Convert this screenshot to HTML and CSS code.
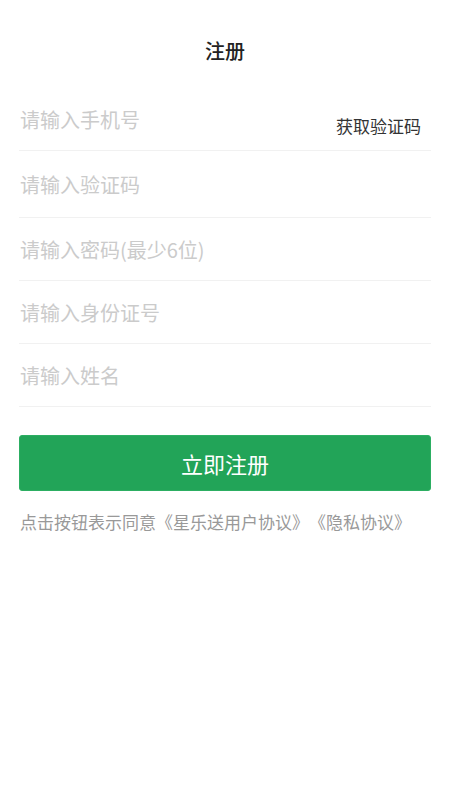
FILE: index.html
```html
<!DOCTYPE html>
<html lang="zh-CN">
<head>
    <meta charset="UTF-8">
    <meta name="viewport" content="width=device-width, initial-scale=1.0">
    <title>注册</title>
    <link rel="stylesheet" href="styles.css">
</head>
<body>

<div class="header">
    <h1>注册</h1>
</div>

<div class="form">
    <div class="form-row">
        <input type="tel" placeholder="请输入手机号">
        <span class="code-btn">获取验证码</span>
    </div>
    <div class="form-row row-code">
        <input type="text" placeholder="请输入验证码">
    </div>
    <div class="form-row">
        <input type="password" placeholder="请输入密码(最少6位)">
    </div>
    <div class="form-row">
        <input type="text" placeholder="请输入身份证号">
    </div>
    <div class="form-row">
        <input type="text" placeholder="请输入姓名">
    </div>

    <button class="submit">立即注册</button>

    <p class="agree">点击按钮表示同意《星乐送用户协议》《隐私协议》</p>
</div>

</body>
</html>
```

FILE: styles.css
```css
/* Base body styling */
body {
    font-family: "Noto Sans CJK SC", "Noto Sans", sans-serif;
    margin: 0;
    padding: 0;
    background-color: #fff;
}

/* Title bar */
.header {
    height: 88px;
    display: flex;
    justify-content: center;
    padding-top: 35px;
    box-sizing: border-box;
}

h1 {
    margin: 0;
    font-size: 20px;
    line-height: 32px;
    font-weight: 500;
    color: #222;
}

.form {
    padding: 0 19px;
}

/* Input rows */
.form-row {
    height: 62px;
    display: flex;
    align-items: center;
    border-bottom: 1px solid #f1f1f1;
}

.row-code {
    height: 66px;
}

.form-row input {
    flex: 1;
    min-width: 0;
    border: none;
    outline: none;
    padding: 0 0 0 1px;
    font-family: inherit;
    font-size: 20px;
    color: #333;
    background: transparent;
}

.form-row input::placeholder {
    color: #cbcbcb;
}

.code-btn {
    font-size: 17px;
    color: #333;
    margin-top: 12px;
    margin-right: 10px;
}

/* Button styling */
.submit {
    display: block;
    width: 100%;
    height: 56px;
    margin-top: 28px;
    background-color: #22a458;
    border: 1px solid #2cae62;
    border-radius: 3px;
    color: #fff;
    font-family: inherit;
    font-size: 22px;
    cursor: pointer;
}

.agree {
    margin: 19px 0 0 1px;
    font-size: 17px;
    line-height: 24px;
    color: #999;
    text-spacing-trim: space-all;
}
```
